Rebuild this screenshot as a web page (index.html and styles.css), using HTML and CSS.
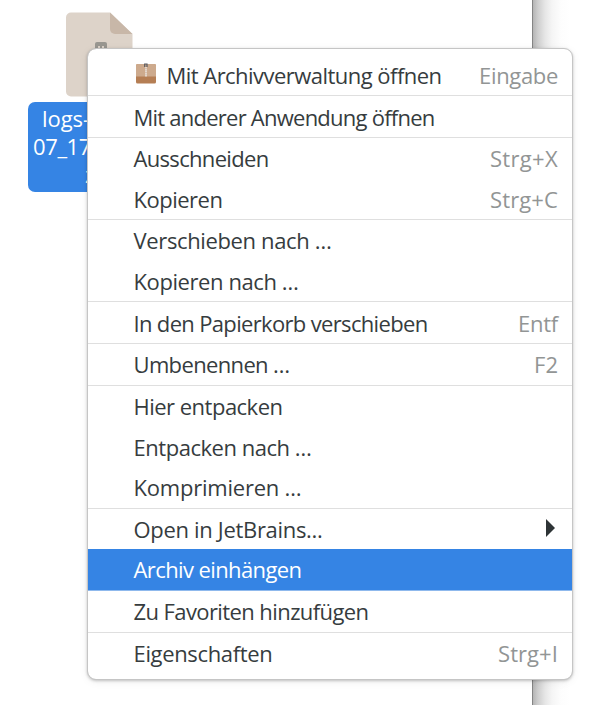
FILE: index.html
```html
<!DOCTYPE html>
<html lang="de">
<head>
<meta charset="utf-8">
<title>Dateien</title>
<link rel="stylesheet" href="styles.css">
</head>
<body>
<main class="desktop">
  <div class="window">
    <div class="file">
      <svg class="file-icon" width="67" height="86" viewBox="0 0 67 86">
        <path fill="#ddd3c9" d="M5 .5h39L66.500 22v57.500a5 5 0 0 1-5 5H5a5 5 0 0 1-5-5v-74a5 5 0 0 1 5-5z"/>
        <path fill="#c8b7a8" d="M44 .5 66.500 22H49a5 5 0 0 1-5-5z"/>
        <path fill="#999791" d="M31 30h8a2 2 0 0 1 2 2v7H29v-7a2 2 0 0 1 2-2z"/>
        <path fill="#ddd3c9" d="M32 34h2v3h-2zM36 34h2v3h-2z"/>
      </svg>
      <div class="file-name"><span data-width="48">logs-</span><span data-width="58">07_17</span><span class="name-end">z</span></div>
    </div>
  </div>
  <nav class="menu">
    <div class="item"><svg class="archive" width="20" height="21" viewBox="0 0 20 21"><rect y="1" width="20" height="19.500" rx="1.500" fill="#b57e54"/><path fill="#cdaa8d" d="M1.500 1h17A1.500 1.500 0 0 1 20 2.500V13.500H0v-11A1.500 1.500 0 0 1 1.500 1z"/><path stroke="#eee" stroke-width="1.300" stroke-dasharray="1.500 .4" d="M10 4v10"/><path fill="none" stroke="#575960" stroke-width="1.200" d="M8.700 4V1h2.300v3"/></svg><span data-width="275">Mit Archivverwaltung öffnen</span><kbd data-width="79">Eingabe</kbd></div>
    <div class="rule"></div>
    <div class="item"><span data-width="301">Mit anderer Anwendung öffnen</span></div>
    <div class="rule"></div>
    <div class="item"><span data-width="135">Ausschneiden</span><kbd data-width="68">Strg+X</kbd></div>
    <div class="item"><span data-width="89">Kopieren</span><kbd data-width="68">Strg+C</kbd></div>
    <div class="rule"></div>
    <div class="item"><span data-width="198">Verschieben nach …</span></div>
    <div class="item"><span data-width="165">Kopieren nach …</span></div>
    <div class="rule"></div>
    <div class="item"><span data-width="294">In den Papierkorb verschieben</span><kbd data-width="40">Entf</kbd></div>
    <div class="rule"></div>
    <div class="item"><span data-width="156">Umbenennen …</span><kbd data-width="24">F2</kbd></div>
    <div class="rule"></div>
    <div class="item"><span data-width="149">Hier entpacken</span></div>
    <div class="item"><span data-width="178">Entpacken nach …</span></div>
    <div class="item"><span data-width="168">Komprimieren …</span></div>
    <div class="rule"></div>
    <div class="item"><span data-width="189">Open in JetBrains...</span><svg class="arrow" width="9" height="18" viewBox="0 0 9 18"><path fill="#2e3436" d="M0 0 9 9 0 18z"/></svg></div>
    <div class="item selected"><span data-width="168">Archiv einhängen</span></div>
    <div class="rule"></div>
    <div class="item"><span data-width="235">Zu Favoriten hinzufügen</span></div>
    <div class="rule"></div>
    <div class="item"><span data-width="139">Eigenschaften</span><kbd data-width="60">Strg+I</kbd></div>
  </nav>
</main>
<script src="script.js"></script>
</body>
</html>
```
FILE: styles.css
```css
* { box-sizing: border-box; }
body {
  margin: 0;
  background: #fff;
  color: #363c3e;
  font: 22px/40px "Open Sans", "Noto Sans", sans-serif;
}
.desktop {
  position: relative;
  width: 600px;
  height: 705px;
  overflow: hidden;
  background: linear-gradient(90deg, #b0b0b0 532px, #cecece 538px, #e6e6e6 545px, #f5f5f5 552px, #fdfdfd 561px, #fff 570px);
}
.window {
  width: 533px;
  height: 705px;
  padding: 12px 0 0 28px;
  border-right: 1px solid #858585;
  background: #fff;
}
.file { width: 144px; }
.file-icon { display: block; margin: 0 auto 4px 38px; }
.file-name {
  display: flex;
  flex-direction: column;
  align-items: flex-start;
  height: 90px;
  padding: 2px 0 0 5px;
  border-radius: 7px;
  background: #3584e4;
  color: #fff;
  line-height: 28px;
}
.file-name span { margin-left: 9px; white-space: nowrap; }
.file-name span:nth-child(2) { margin-left: 0; }
.file-name .name-end { margin-left: 52px; }
.menu {
  position: absolute;
  left: 87px;
  top: 48px;
  width: 486px;
  height: 632px;
  padding-top: 6px;
  border: 1px solid #c5c5c5;
  border-radius: 9px;
  background: #fff;
  background-clip: padding-box;
  overflow: hidden;
  box-shadow: 0 1px 3px rgba(0, 0, 0, .22), 0 2px 10px rgba(0, 0, 0, .06);
}
.item {
  display: flex;
  align-items: center;
  height: 40.330px;
  padding: 0 14px 1px 45.500px;
  white-space: nowrap;
}
.item kbd {
  margin-left: auto;
  color: #929595;
  font: inherit;
}
.archive { margin: -2px 11px 0 2px; }
.arrow { margin: -1px 3px 0 auto; }
.rule { height: 1px; margin-bottom: .5px; background: #dfdfdf; }
.selected { background: #3584e4; color: #fff; }
.selected + .rule { background: #8fb9ed; }
```
FILE: script.js
```js
document.querySelectorAll("[data-width]").forEach((label) => {
  const extra = Number(label.dataset.width) - label.getBoundingClientRect().width;
  label.style.letterSpacing = extra / label.textContent.length + "px";
});
```
